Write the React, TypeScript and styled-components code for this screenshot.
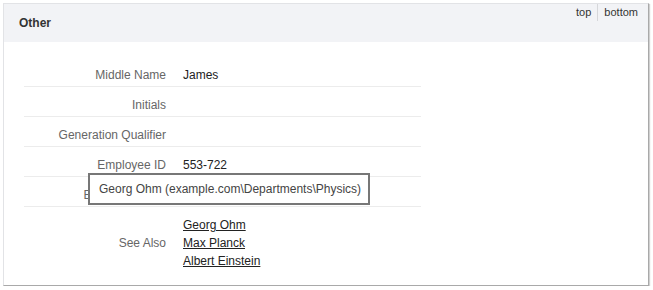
import styled, { createGlobalStyle } from 'styled-components';

const Global = createGlobalStyle`
  html, body {
    margin: 0;
    padding: 0;
    background: #fff;
    font-family: "Liberation Sans", Arial, sans-serif;
  }
`;

const Panel = styled.section`
  position: relative;
  width: 646px;
  height: 283px;
  margin: 3px 0 0 3px;
  border: 1px solid #e2e3e6;
  border-right-color: #a9a9a9;
  border-bottom-color: #a9a9a9;
  box-shadow: 1px 1px 1px #d0d0d0;
  background: #fff;
  box-sizing: border-box;
`;

const Header = styled.header`
  display: flex;
  justify-content: space-between;
  height: 38px;
  background: #f2f3f6;
  padding-left: 15px;
  h2 {
    margin: 0;
    font-size: 12px;
    font-weight: bold;
    line-height: 38px;
    color: #333;
  }
`;

const Nav = styled.nav`
  display: flex;
  align-items: flex-start;
  padding-right: 4px;
`;

const NavLink = styled.a<{ $sep?: boolean }>`
  font-size: 11px;
  line-height: 17px;
  color: #333;
  text-decoration: none;
  padding: 0 6px;
  border-left: ${(p) => (p.$sep ? '1px solid #d6d7da' : 'none')};
`;

const Table = styled.div`
  width: 397px;
  margin: 15px 0 0 20px;
  font-size: 12px;
`;

const Row = styled.div<{ $last?: boolean }>`
  display: grid;
  grid-template-columns: 159px 1fr;
  align-items: center;
  padding: ${(p) => (p.$last ? '9px 0 0' : '11px 0 4px')};
  line-height: 14px;
  border-bottom: ${(p) => (p.$last ? 'none' : '1px solid #ececec')};
`;

const Label = styled.div`
  text-align: right;
  padding-right: 17px;
  color: #666;
`;

const Value = styled.div`
  color: #222;
`;

const Links = styled.div`
  display: flex;
  flex-direction: column;
  a {
    color: #222;
    line-height: 18px;
    text-decoration: underline;
  }
`;

const Tooltip = styled.div`
  position: absolute;
  left: 84px;
  top: 169px;
  width: 282px;
  height: 32px;
  box-sizing: border-box;
  border: 2px solid #777;
  background: #fff;
  padding-left: 9px;
  font-size: 12px;
  line-height: 28px;
  color: #444;
`;

const rows: [string, string][] = [
  ['Middle Name', 'James'],
  ['Initials', ''],
  ['Generation Qualifier', ''],
  ['Employee ID', '553-722'],
  ['Employee Type', ''],
];

const App = () => {
  return (
    <>
      <Global />
      <Panel>
        <Header>
          <h2>Other</h2>
          <Nav>
            <NavLink>top</NavLink>
            <NavLink $sep>bottom</NavLink>
          </Nav>
        </Header>
        <Table>
          {rows.map(([label, value]) => (
            <Row key={label}>
              <Label>{label}</Label>
              <Value>{value}</Value>
            </Row>
          ))}
          <Row $last>
            <Label>See Also</Label>
            <Links>
              <a>Georg Ohm</a>
              <a>Max Planck</a>
              <a>Albert Einstein</a>
            </Links>
          </Row>
        </Table>
        <Tooltip>Georg Ohm (example.com\Departments\Physics)</Tooltip>
      </Panel>
    </>
  );
};

export default App;
